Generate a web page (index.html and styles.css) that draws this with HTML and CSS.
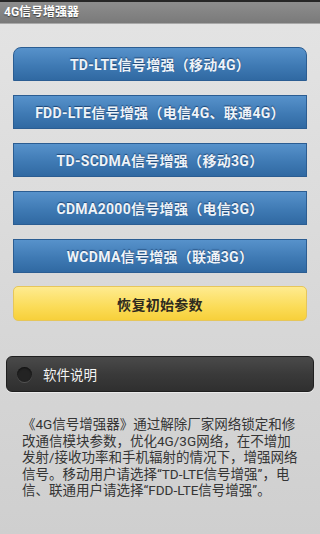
FILE: index.html
```html
<!DOCTYPE html>
<html lang="zh-CN">
<head>
<meta charset="utf-8">
<title>4G信号增强器</title>
<link rel="stylesheet" href="styles.css">
</head>
<body>
<div class="app">
  <header class="titlebar">4G信号增强器</header>
  <main class="content">
    <div class="buttons">
      <button class="btn btn-blue btn-first">TD-LTE信号增强（移动4G）</button>
      <button class="btn btn-blue">FDD-LTE信号增强（电信4G、联通4G）</button>
      <button class="btn btn-blue">TD-SCDMA信号增强（移动3G）</button>
      <button class="btn btn-blue">CDMA2000信号增强（电信3G）</button>
      <button class="btn btn-blue">WCDMA信号增强（联通3G）</button>
      <button class="btn btn-yellow">恢复初始参数</button>
    </div>
    <div class="section-bar">
      <span class="dot"></span>
      <span class="section-title">软件说明</span>
    </div>
    <p class="desc">《4G信号增强器》通过解除厂家网络锁定和修<br>改通信模块参数，优化4G/3G网络，在不增加<br>发射/接收功率和手机辐射的情况下，增强网络<br>信号。移动用户请选择“TD-LTE信号增强”，电<br>信、联通用户请选择“FDD-LTE信号增强”。</p>
  </main>
</div>
</body>
</html>
```
FILE: styles.css
```css
html, body {
  margin: 0;
  padding: 0;
}
body {
  width: 320px;
  height: 534px;
  overflow: hidden;
  font-family: Roboto, "Noto Sans CJK SC", sans-serif;
  background: linear-gradient(#e4e4e4, #cfcfcf);
}
.app {
  display: flex;
  flex-direction: column;
  height: 534px;
}
.titlebar {
  box-sizing: border-box;
  height: 24px;
  border-top: 2px solid #262626;
  border-bottom: 1px solid #a9a9a9;
  background: linear-gradient(#8d8d8d, #7a7a7a);
  color: #fff;
  font-weight: bold;
  font-size: 12px;
  line-height: 20px;
  padding-left: 4px;
  text-shadow: 0 1px 1px rgba(0,0,0,0.5);
}
.content {
  display: flex;
  flex-direction: column;
  padding-top: 23px;
}
.buttons {
  display: flex;
  flex-direction: column;
  gap: 14px;
  padding: 0 13px 0 13px;
}
.btn {
  box-sizing: border-box;
  height: 34px;
  width: 294px;
  margin: 0;
  font-family: Roboto, "Noto Sans CJK SC", sans-serif;
  font-size: 14px;
  letter-spacing: 0.3px;
  font-weight: bold;
  border-radius: 0;
  padding: 0;
}
.btn-blue {
  color: #eef3f9;
  background: linear-gradient(#5792cb, #3f7ab4 55%, #3069a2);
  border: 1px solid #2b5d92;
  text-shadow: 0 -1px 1px rgba(0,30,70,0.6);
}
.btn-first {
  border-radius: 8px 8px 0 0;
}
.btn-yellow {
  color: #2e2a1e;
  background: linear-gradient(#feeb90, #fbdc58 60%, #f7d03a);
  border: 1px solid #e6c65a;
  border-radius: 5px;
  height: 35px;
  margin-top: -1px;
}
.section-bar {
  box-sizing: border-box;
  margin: 35px 6px 0 6px;
  height: 36px;
  border-radius: 6px;
  background: linear-gradient(#4a4a4a, #3a3a3a 50%, #2f2f2f);
  border: 1px solid #1f1f1f;
  box-shadow: 0 1px 0 rgba(255,255,255,0.5);
  display: flex;
  align-items: center;
  padding-left: 10px;
  gap: 11px;
}
.dot {
  width: 15px;
  height: 15px;
  border-radius: 50%;
  background: #232323;
  box-shadow: 0 1px 0 rgba(255,255,255,0.15), inset 0 1px 2px rgba(0,0,0,0.6);
}
.section-title {
  color: #f4f4f4;
  font-size: 13.5px;
}
.desc {
  margin: 24px 0 0 22px;
  font-size: 13.5px;
  line-height: 16.5px;
  color: #353535;
  white-space: nowrap;
}
```
